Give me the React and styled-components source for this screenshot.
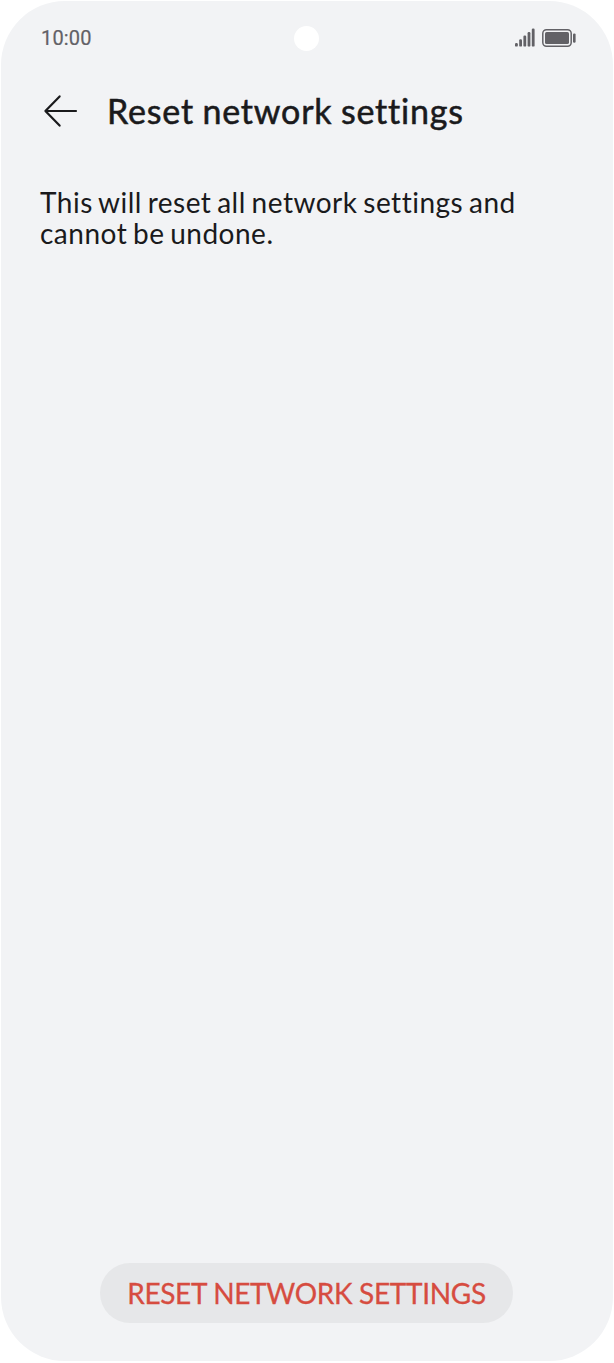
import styled, { createGlobalStyle } from "styled-components";

const GlobalStyle = createGlobalStyle`
  * {
    box-sizing: border-box;
  }

  body {
    margin: 0;
    background: #fff;
    font-family: "Lato", sans-serif;
    color: #1a1a1c;
  }
`;

const Screen = styled.div`
  display: flex;
  flex-direction: column;
  width: 612px;
  height: 1360px;
  margin: 1px 0 2px 1px;
  background: #f2f3f5;
  border-radius: 64px;
`;

const StatusBar = styled.header`
  display: grid;
  grid-template-columns: 1fr 25px 1fr;
  align-items: center;
  height: 74px;
  padding: 0 37px 0 38px;
  color: #626166;
`;

const Time = styled.span`
  padding-left: 2px;
  font-family: "Roboto", sans-serif;
  font-size: 20px;
  line-height: 24px;
  letter-spacing: 0.15px;
  -webkit-text-stroke: 0.2px currentColor;
`;

const Camera = styled.span`
  width: 25px;
  height: 25px;
  margin-left: -1px;
  border-radius: 50%;
  background: #fff;
`;

const StatusIcons = styled.div`
  display: flex;
  justify-content: flex-end;
  align-items: center;
  gap: 7px;

  svg {
    display: block;
  }
`;

const TitleBar = styled.div`
  display: flex;
  align-items: center;
  gap: 28px;
  height: 72px;
  padding-left: 42px;
`;

const Title = styled.h1`
  margin: 0;
  font-size: 34px;
  font-weight: 400;
  line-height: 42px;
  white-space: nowrap;
  letter-spacing: 0.8px;
  word-spacing: -1px;
  -webkit-text-stroke: 0.55px currentColor;
`;

const Message = styled.p`
  margin: 40px 60px 0 39px;
  font-size: 28px;
  line-height: 31px;
  letter-spacing: 0.5px;
  word-spacing: -1.9px;
`;

const Footer = styled.footer`
  display: flex;
  justify-content: center;
  margin-top: auto;
  padding: 0 1px 38px 0;
`;

const ResetButton = styled.button`
  width: 413px;
  height: 60px;
  padding: 0;
  border: 0;
  border-radius: 30px;
  background: #e6e7e9;
  color: #d64c40;
  font-family: inherit;
  font-size: 28px;
  line-height: 34px;
  white-space: nowrap;
  letter-spacing: -0.32px;
  -webkit-text-stroke: 0.3px currentColor;
`;

const SignalIcon = () => (
  <svg width="20" height="20" viewBox="0 0 20 20" fill="currentColor">
    <rect x="0" y="15" width="2.8" height="3.6" rx="1.2" />
    <rect x="4.2" y="11.3" width="2.8" height="7.3" rx="1.2" />
    <rect x="8.4" y="7.6" width="2.8" height="11" rx="1.2" />
    <rect x="12.6" y="4" width="2.8" height="14.6" rx="1.2" />
    <rect x="16.8" y="0.6" width="2.8" height="18" rx="1.2" />
  </svg>
);

const BatteryIcon = () => (
  <svg width="34" height="18" viewBox="0 0 34 18" fill="currentColor">
    <rect x="0.8" y="0.8" width="28.4" height="16.4" rx="3.6" fill="none" stroke="currentColor" strokeWidth="1.5" />
    <rect x="3" y="3" width="24" height="12" rx="1.6" />
    <rect x="31" y="4.4" width="2.6" height="9.4" rx="1.2" />
  </svg>
);

const BackIcon = () => (
  <svg
    width="36"
    height="34"
    viewBox="0 0 36 34"
    fill="none"
    stroke="currentColor"
    strokeWidth="2.2"
    strokeLinecap="round"
    strokeLinejoin="round"
  >
    <path d="M33 17H2.4M16.6 2.4L2.4 17L16.6 31.6" />
  </svg>
);

const App = () => {
  return (
    <>
      <GlobalStyle />
      <Screen>
        <StatusBar>
          <Time>10:00</Time>
          <Camera />
          <StatusIcons>
            <SignalIcon />
            <BatteryIcon />
          </StatusIcons>
        </StatusBar>
        <TitleBar>
          <BackIcon />
          <Title>Reset network settings</Title>
        </TitleBar>
        <Message>
          This will reset all network settings and
          <br />
          cannot be undone.
        </Message>
        <Footer>
          <ResetButton type="button">RESET NETWORK SETTINGS</ResetButton>
        </Footer>
      </Screen>
    </>
  );
};

export default App;
